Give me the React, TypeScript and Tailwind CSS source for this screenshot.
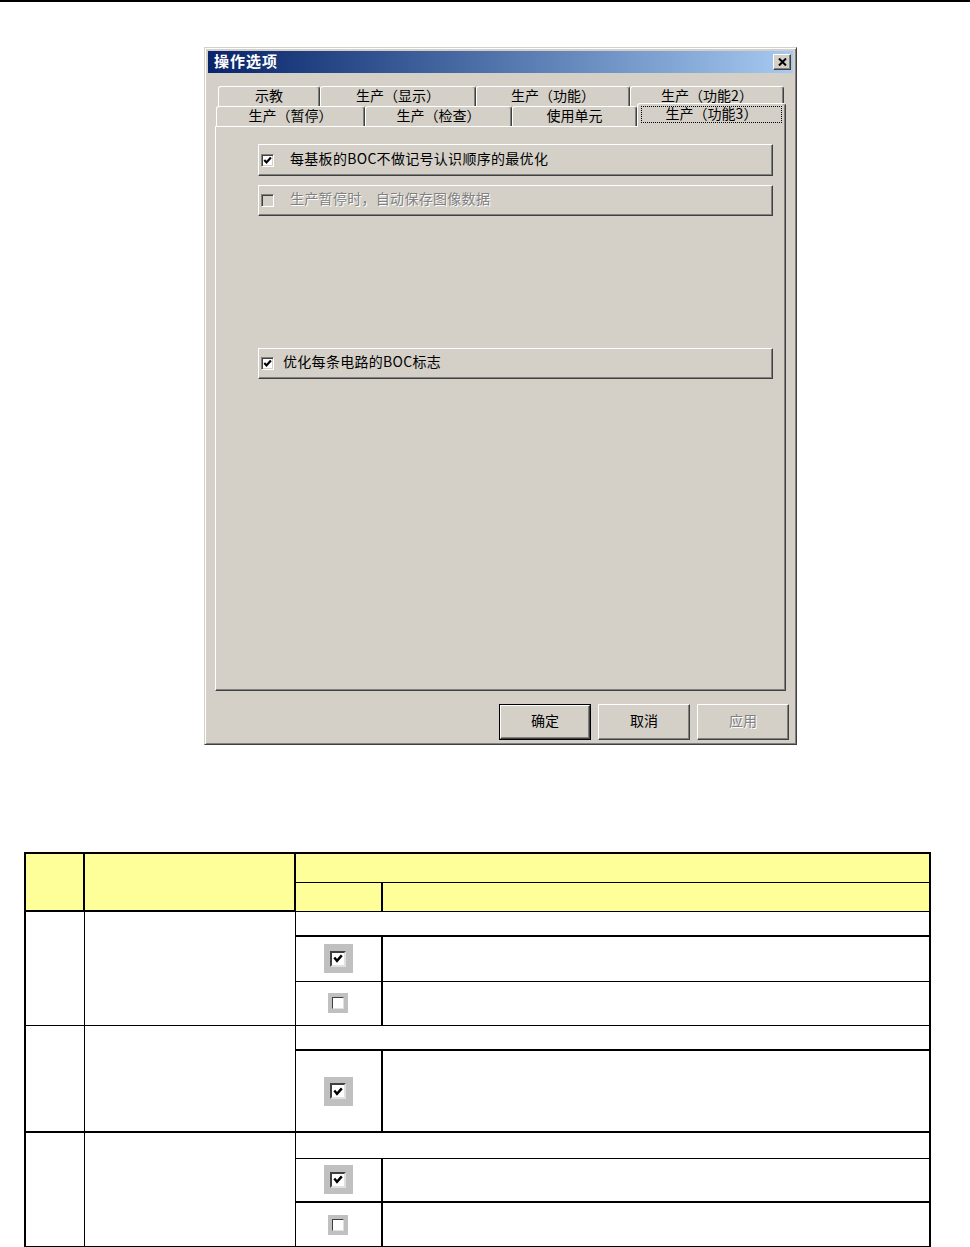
import React from 'react';

const FONT = "font-['Noto_Sans_CJK_SC','Noto_Sans',sans-serif]";

function CheckMark({ size = 13 }: { size?: number }) {
  return (
    <svg width={size - 4} height={size - 4} viewBox="0 0 9 9" className="block">
      <path d="M1.3 4 L3.5 6.4 L7.9 1.5" fill="none" stroke="#000" strokeWidth="2.2" />
    </svg>
  );
}

function WinCheckbox({ checked, disabled }: { checked?: boolean; disabled?: boolean }) {
  return (
    <div
      className={`flex items-center justify-center w-[13px] h-[13px] border border-t-[#808080] border-l-[#808080] border-b-white border-r-white shadow-[inset_1px_1px_0_#404040,inset_-1px_-1px_0_#d4d0c8] ${
        disabled ? 'bg-[#d4d0c8]' : 'bg-white'
      }`}
    >
      {checked && <CheckMark />}
    </div>
  );
}

function OptionRow({
  label,
  checked,
  disabled,
  gap,
  h,
}: {
  label: string;
  checked?: boolean;
  disabled?: boolean;
  gap: string;
  h: string;
}) {
  return (
    <div
      className={`flex items-center ${h} pl-[2px] border border-t-white border-l-white border-r-[#404040] border-b-[#404040] shadow-[inset_-1px_-1px_0_#808080]`}
    >
      <WinCheckbox checked={checked} disabled={disabled} />
      <span
        className={`${gap} pb-[5px] text-[14px] leading-none tracking-[0.3px] ${
          disabled ? 'text-[#808080] [text-shadow:1px_1px_0_#ffffff]' : 'text-black'
        }`}
      >
        {label}
      </span>
    </div>
  );
}

function Tab({ label, w, selected }: { label: string; w: string; selected?: boolean }) {
  if (selected) {
    return (
      <div
        className={`${w} relative z-10 -mb-px h-[24px] bg-[#d4d0c8] border-t border-l border-white border-r border-r-[#404040] shadow-[inset_-1px_0_0_#808080] rounded-t-[3px] px-[3px] pt-[2px] pb-[3px]`}
      >
        <div className="h-[17px] border border-dotted border-black flex items-center justify-center text-[14px] leading-none pb-[3px]">
          {label}
        </div>
      </div>
    );
  }
  return (
    <div
      className={`${w} h-[20px] bg-[#d4d0c8] border-t border-l border-white border-r border-r-[#404040] shadow-[inset_-1px_0_0_#808080] rounded-t-[3px] flex items-center justify-center text-[14px] leading-none pb-[4px]`}
    >
      {label}
    </div>
  );
}

function WinButton({ label, isDefault, disabled }: { label: string; isDefault?: boolean; disabled?: boolean }) {
  const inner = (
    <div
      className={`flex-1 flex items-center justify-center pb-[4px] border border-t-white border-l-white border-r-[#404040] border-b-[#404040] shadow-[inset_-1px_-1px_0_#808080,inset_1px_1px_0_#d4d0c8] text-[14px] leading-none ${
        disabled ? 'text-[#808080] [text-shadow:1px_1px_0_#ffffff]' : 'text-black'
      }`}
    >
      {label}
    </div>
  );
  return (
    <div className={`w-[92px] h-[36px] flex ${isDefault ? 'border border-black' : ''}`}>{inner}</div>
  );
}

function TableCheck({ checked }: { checked?: boolean }) {
  if (checked) {
    return (
      <div className="mx-auto w-[29px] h-[29px] bg-[#c0c0c0] flex items-center justify-center">
        <div className="w-[16px] h-[16px] bg-white border-2 border-t-[#404040] border-l-[#404040] border-b-[#e0e0e0] border-r-[#e0e0e0] flex items-center justify-center">
          <svg width="10" height="9" viewBox="0 0 10 9" className="block">
            <path d="M1.3 3.6 L4 6.8 L8.8 1.4" fill="none" stroke="#000" strokeWidth="2.4" />
          </svg>
        </div>
      </div>
    );
  }
  return (
    <div className="mx-auto w-[20px] h-[20px] bg-[#c0c0c0] flex items-center justify-center">
      <div className="w-[12px] h-[12px] bg-white border border-t-[#404040] border-l-[#404040] border-b-[#e0e0e0] border-r-[#e0e0e0]" />
    </div>
  );
}

export default function App() {
  return (
    <div className={`w-[970px] h-[1247px] bg-white overflow-hidden ${FONT}`}>
      <div className="h-[2px] bg-black" />

      {/* dialog */}
      <div className="ml-[204px] mt-[45px] w-[593px] h-[698px] bg-[#d4d0c8] border border-t-[#d4d0c8] border-l-[#d4d0c8] border-r-[#404040] border-b-[#404040] shadow-[inset_1px_1px_0_#ffffff,inset_-1px_-1px_0_#808080] p-[2px] flex flex-col">
        <div className="h-[22px] mx-px mt-px flex items-center justify-between bg-gradient-to-r from-[#0a246a] to-[#a6caf0]">
          <span className="pl-[6px] pb-[3px] text-white font-bold text-[15px] leading-none tracking-[1px]">操作选项</span>
          <div className="mr-[2px] w-[18px] h-[16px] bg-[#d4d0c8] border border-t-white border-l-white border-r-[#404040] border-b-[#404040] shadow-[inset_-1px_-1px_0_#808080] flex items-center justify-center">
            <svg width="9" height="8" viewBox="0 0 9 8" className="block">
              <path d="M1 0.5 L8 7.5 M8 0.5 L1 7.5" stroke="#000" strokeWidth="2" />
            </svg>
          </div>
        </div>

        <div className="mt-[13px] mx-[8px] flex flex-col">
          <div className="flex pl-[3px]">
            <Tab label="示教" w="w-[102px]" />
            <Tab label="生产（显示）" w="w-[156px]" />
            <Tab label="生产（功能）" w="w-[154px]" />
            <Tab label="生产（功能2）" w="w-[154px]" />
          </div>
          <div className="flex items-end h-[20px] pl-[1px]">
            <Tab label="生产（暂停）" w="w-[149px]" />
            <Tab label="生产（检查）" w="w-[147px]" />
            <Tab label="使用单元" w="w-[125px]" />
            <Tab label="生产（功能3）" w="w-[149px]" selected />
          </div>

          <div className="h-[565px] border border-t-white border-l-white border-r-[#404040] border-b-[#404040] shadow-[inset_-1px_-1px_0_#808080] flex flex-col pl-[42px] pr-[12px] pt-[17px]">
            <OptionRow label="每基板的BOC不做记号认识顺序的最优化" checked gap="ml-[16px]" h="h-[32px]" />
            <div className="mt-[9px]">
              <OptionRow label="生产暂停时，自动保存图像数据" disabled gap="ml-[16px]" h="h-[31px]" />
            </div>
            <div className="mt-[132px]">
              <OptionRow label="优化每条电路的BOC标志" checked gap="ml-[9px]" h="h-[31px]" />
            </div>
          </div>
        </div>

        <div className="mt-[13px] flex justify-end gap-[7px] pr-[5px]">
          <WinButton label="确定" isDefault />
          <WinButton label="取消" />
          <WinButton label="应用" disabled />
        </div>
      </div>

      {/* table */}
      <table className="ml-[24px] mt-[107px] w-[905px] table-fixed border-collapse border-2 border-black">
        <colgroup>
          <col className="w-[59px]" />
          <col className="w-[211px]" />
          <col className="w-[87px]" />
          <col className="w-[548px]" />
        </colgroup>
        <thead>
          <tr className="h-[29px] bg-[#ffff99]">
            <td rowSpan={2} className="border-2 border-black" />
            <td rowSpan={2} className="border-2 border-black" />
            <td colSpan={2} className="border border-black" />
          </tr>
          <tr className="h-[29px] bg-[#ffff99]">
            <td className="border border-black border-r-2" />
            <td className="border border-black" />
          </tr>
        </thead>
        <tbody>
          <tr className="h-[25px]">
            <td rowSpan={3} className="border border-black" />
            <td rowSpan={3} className="border border-black" />
            <td colSpan={2} className="border border-black border-b-2" />
          </tr>
          <tr className="h-[45px]">
            <td className="border border-black border-r-2">
              <TableCheck checked />
            </td>
            <td className="border border-black" />
          </tr>
          <tr className="h-[44px]">
            <td className="border border-black border-r-2">
              <TableCheck />
            </td>
            <td className="border border-black" />
          </tr>

          <tr className="h-[25px]">
            <td rowSpan={2} className="border border-black" />
            <td rowSpan={2} className="border border-black" />
            <td colSpan={2} className="border border-black border-b-2" />
          </tr>
          <tr className="h-[82px]">
            <td className="border border-black border-r-2">
              <TableCheck checked />
            </td>
            <td className="border border-black" />
          </tr>

          <tr className="h-[26px]">
            <td rowSpan={3} className="border border-black border-t-2" />
            <td rowSpan={3} className="border border-black border-t-2" />
            <td colSpan={2} className="border border-black border-t-2" />
          </tr>
          <tr className="h-[44px]">
            <td className="border border-black border-r-2">
              <TableCheck checked />
            </td>
            <td className="border border-black" />
          </tr>
          <tr className="h-[45px]">
            <td className="border border-black border-r-2 border-t-2">
              <TableCheck />
            </td>
            <td className="border border-black border-t-2" />
          </tr>
        </tbody>
      </table>
    </div>
  );
}
